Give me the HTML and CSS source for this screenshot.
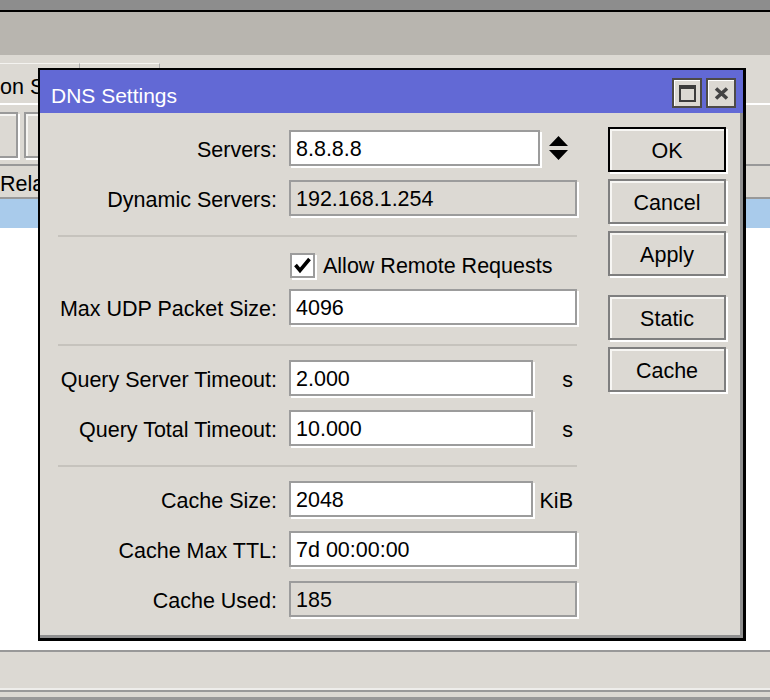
FILE: index.html
```html
<!DOCTYPE html>
<html>
<head>
<meta charset="utf-8">
<title>DNS Settings</title>
<link rel="stylesheet" href="styles.css">
</head>
<body>
<div class="app">
  <div class="topstrip"></div>
  <div class="apptitle"></div>
  <div class="tabs">
    <div class="tab">on S</div>
    <div class="tab"></div>
  </div>
  <div class="toolbar">
    <div class="tool tool-first"></div>
    <div class="tool"></div>
  </div>
  <div class="filter">Rela</div>
  <div class="colhead"></div>
  <div class="list"></div>
  <div class="status"></div>
  <div class="statusbot"></div>
</div>

<div class="dialog">
  <div class="titlebar">
    <span class="title">DNS Settings</span>
    <div class="wbtns">
      <div class="wbtn"><div class="ico-max"></div></div>
      <div class="wbtn">
        <svg class="ico-close" width="15" height="13" viewBox="0 0 15 13"><path d="M2 1.5 L13 11.5 M13 1.5 L2 11.5" stroke="#444" stroke-width="3.6" fill="none"/></svg>
      </div>
    </div>
  </div>
  <div class="dbody">
    <div class="form">
      <div class="row">
        <span class="lbl">Servers:</span>
        <div class="field">
          <div class="inp w-srv">8.8.8.8</div>
          <svg class="spin" width="19" height="24" viewBox="0 0 19 24"><path d="M9.5 0 L19 10 L0 10 Z M0 14 L19 14 L9.5 24 Z" fill="#000"/></svg>
        </div>
      </div>
      <div class="row">
        <span class="lbl">Dynamic Servers:</span>
        <div class="field"><div class="inp ro w-full">192.168.1.254</div></div>
      </div>
      <div class="sep"></div>
      <div class="row row-cb">
        <span></span>
        <div class="field">
          <span class="cb"><svg width="21" height="21" viewBox="0 0 21 21"><path d="M3.5 10 L8 15.5 L17.5 4" stroke="#000" stroke-width="3.6" fill="none" stroke-linejoin="miter"/></svg></span>
          <span class="cbtext">Allow Remote Requests</span>
        </div>
      </div>
      <div class="row">
        <span class="lbl">Max UDP Packet Size:</span>
        <div class="field"><div class="inp w-full">4096</div></div>
      </div>
      <div class="sep"></div>
      <div class="row">
        <span class="lbl">Query Server Timeout:</span>
        <div class="field"><div class="inp w-short">2.000</div><span class="unit">s</span></div>
      </div>
      <div class="row">
        <span class="lbl">Query Total Timeout:</span>
        <div class="field"><div class="inp w-short">10.000</div><span class="unit">s</span></div>
      </div>
      <div class="sep"></div>
      <div class="row">
        <span class="lbl">Cache Size:</span>
        <div class="field"><div class="inp w-short">2048</div><span class="unit">KiB</span></div>
      </div>
      <div class="row">
        <span class="lbl">Cache Max TTL:</span>
        <div class="field"><div class="inp w-full">7d 00:00:00</div></div>
      </div>
      <div class="row">
        <span class="lbl">Cache Used:</span>
        <div class="field"><div class="inp ro w-full">185</div></div>
      </div>
    </div>
    <div class="buttons">
      <div class="btn btn-default">OK</div>
      <div class="btn">Cancel</div>
      <div class="btn">Apply</div>
      <div class="btn btn-group">Static</div>
      <div class="btn">Cache</div>
    </div>
  </div>
</div>
</body>
</html>
```

FILE: styles.css
```css
* { box-sizing: border-box; }
html, body { margin: 0; padding: 0; }
body {
  width: 770px;
  height: 700px;
  overflow: hidden;
  position: relative;
  background: #dcd9d3;
  font-family: "Liberation Sans", Arial, sans-serif;
  font-size: 21.5px;
  color: #000;
}

/* background application window */
.app { display: flex; flex-direction: column; height: 700px; }
.topstrip { height: 12px; background: #8d8d8d; border-bottom: 2px solid #000; }
.apptitle { height: 43px; background: #b8b5af; }
.tabs {
  height: 50px;
  display: flex;
  padding-top: 8px;
  border-bottom: 2px solid #fff;
}
.tab {
  width: 80px;
  flex: none;
  border-top: 1px solid #f4f3f0;
  border-right: 1px solid #a8a8a8;
  display: flex;
  align-items: center;
  padding-top: 8px;
  white-space: nowrap;
}
.toolbar {
  height: 61px;
  display: flex;
  gap: 6px;
  padding-top: 7px;
  border-bottom: 2px solid #999;
}
.tool {
  width: 48px;
  height: 46px;
  border: 2px solid #9a9a9a;
  box-shadow: inset 2px 2px 0 #f6f5f2, 2px 2px 0 #fff;
}
.tool-first { margin-left: -30px; }
.filter {
  height: 33px;
  display: flex;
  align-items: center;
  padding-top: 5px;
  border-bottom: 2px solid #999;
  white-space: nowrap;
}
.colhead { height: 29px; background: #a9cbeb; }
.list { flex: 1; background: #fff; }
.status {
  height: 40px;
  border-top: 2px solid #999;
  border-bottom: 2px solid #efeeeb;
}
.statusbot {
  height: 10px;
  border-top: 2px solid #999;
  border-bottom: 3px solid #999;
}

/* dialog window */
.dialog {
  position: absolute;
  left: 38px;
  top: 68px;
  width: 708px;
  height: 573px;
  border: 2px solid #000;
  border-right-width: 3px;
  border-bottom-width: 3px;
  background: #dcd9d3;
  display: flex;
  flex-direction: column;
}
.titlebar {
  height: 43px;
  flex: none;
  background: #6269d5;
  color: #fff;
  display: flex;
  justify-content: space-between;
  align-items: flex-start;
  padding: 8px 7px 0 11px;
}
.title { line-height: 30px; margin-top: 3px; font-size: 21px; }
.wbtns { display: flex; gap: 4px; }
.wbtn {
  width: 30px;
  height: 30px;
  border: 2px solid #4d4a47;
  background: #dcd9d3;
  box-shadow: inset 1px 1px 0 #fff;
  display: flex;
  align-items: center;
  justify-content: center;
}
.ico-max {
  width: 17px;
  height: 17px;
  border: 2px solid #3c3c3c;
  border-top-width: 4px;
}

.dbody {
  flex: 1;
  display: flex;
  border-right: 3px solid #8f8f8f;
  border-bottom: 3px solid #8f8f8f;
}
.form {
  width: 537px;
  padding: 17px 0 0 18px;
  display: flex;
  flex-direction: column;
  gap: 14px;
}
.row {
  display: grid;
  grid-template-columns: 219px 288px;
  column-gap: 12px;
  align-items: center;
  height: 36px;
}
.row-cb { height: 24px; }
.lbl { text-align: right; white-space: nowrap; padding-top: 4px; }
.field { display: flex; align-items: center; }
.inp {
  height: 36px;
  border: 2px solid #9c9c9c;
  background: #fff;
  box-shadow: 2px 2px 0 #fff;
  padding: 3px 0 0 5px;
  display: flex;
  align-items: center;
  white-space: nowrap;
}
.inp.ro { background: #dcd9d3; }
.w-full { width: 288px; }
.w-short { width: 244px; }
.w-srv { width: 251px; }
.spin { margin-left: 9px; flex: none; }
.unit { flex: 1; text-align: right; padding: 4px 4px 0 0; }
.sep {
  width: 519px;
  height: 2px;
  margin-top: 5px;
  background: #c6c3bd;
}
.cb {
  width: 25px;
  height: 25px;
  margin-left: 1px;
  border: 2px solid #9c9c9c;
  background: #fff;
  box-shadow: 2px 2px 0 #fff;
  display: flex;
  align-items: center;
  justify-content: center;
}
.cbtext { margin-left: 8px; white-space: nowrap; padding-top: 3px; }

.buttons {
  width: 118px;
  margin-left: 31px;
  padding-top: 14px;
  display: flex;
  flex-direction: column;
  gap: 7px;
}
.btn {
  height: 45px;
  border: 2px solid #7f7f7f;
  background: #dcd9d3;
  box-shadow: inset 2px 2px 0 #f7f6f3, 2px 2px 0 #fff;
  display: flex;
  align-items: center;
  justify-content: center;
  padding-top: 3px;
}
.btn-default { border-color: #000; }
.btn-group { margin-top: 12px; }
```
